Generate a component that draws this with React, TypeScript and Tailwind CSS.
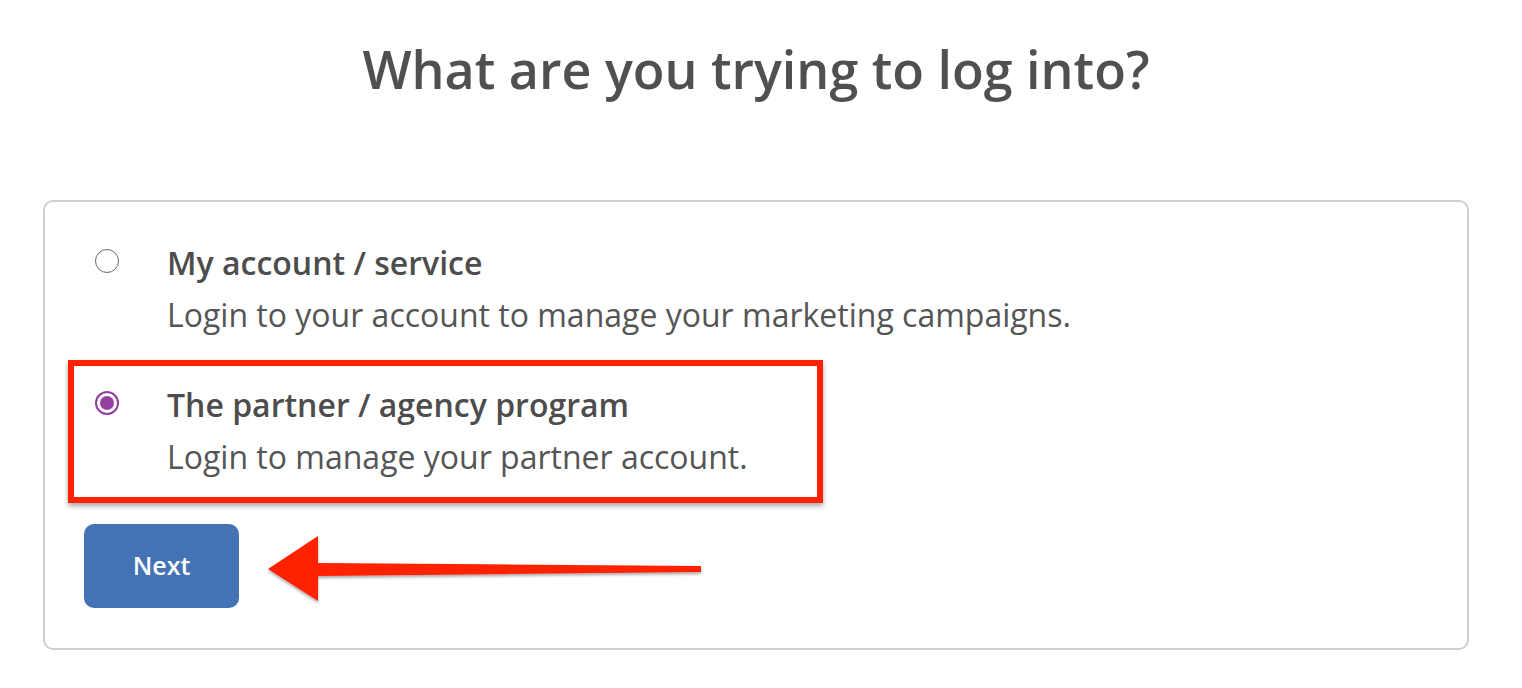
const options = [
  {
    id: "account",
    title: "My account / service",
    desc: "Login to your account to manage your marketing campaigns.",
  },
  {
    id: "partner",
    title: "The partner / agency program",
    desc: "Login to manage your partner account.",
  },
];

const Radio = ({ checked }: { checked: boolean }) =>
  checked ? (
    <span className="flex h-[24px] w-[24px] items-center justify-center rounded-full border-2 border-[#8f3f9f] bg-white">
      <span className="h-[14px] w-[14px] rounded-full bg-[#94409f]"></span>
    </span>
  ) : (
    <span className="block h-[24px] w-[24px] rounded-full border border-[#666] bg-white"></span>
  );

export default function App() {
  const selected = "partner";

  return (
    <div className="min-h-[688px] w-full bg-white font-['Open_Sans',sans-serif] text-[#555]">
      <div className="ml-[43px] flex w-[1426px] flex-col">
        <h1 className="pt-[34px] text-center text-[52px] font-semibold leading-[70px] text-[#505050]">
          What are you trying to log into?
        </h1>

        <div className="relative mt-[96px] flex flex-col rounded-[10px] border-2 border-[#cfcfcf] pb-[40px] pl-[39px] pr-[50px] pt-[40px]">
          <div className="flex flex-col gap-[48px]">
            {options.map((o) => (
              <div key={o.id} className="flex items-start">
                <div className="w-[83px] pl-[11px] pt-[7px]">
                  <Radio checked={o.id == selected} />
                </div>
                <div className="flex flex-col">
                  <span className="text-[32px] font-semibold leading-[42px] text-[#4d4d4d]">
                    {o.title}
                  </span>
                  <span className="mt-[10px] text-[32px] leading-[42px] text-[#555]">
                    {o.desc}
                  </span>
                </div>
              </div>
            ))}
          </div>

          <div className="mt-[46px] flex">
            <button className="h-[84px] w-[155px] rounded-[10px] bg-[#4373b5] text-[25px] font-semibold text-white">
              Next
            </button>
          </div>

          {/* annotation: red box around selected option */}
          <div className="absolute left-[23px] top-[158px] h-[143px] w-[755px] border-[6px] border-[#ff2200] shadow-[0_3px_5px_rgba(0,0,0,0.35)]"></div>

          {/* annotation: arrow pointing at the button */}
          <svg
            className="absolute left-[220px] top-[332px]"
            width="440"
            height="70"
            viewBox="0 0 440 70"
          >
            <defs>
              <filter id="sh" x="-10%" y="-30%" width="120%" height="160%">
                <feDropShadow dx="0" dy="2" stdDeviation="1.5" floodColor="#000" floodOpacity="0.35" />
              </filter>
            </defs>
            <path
              d="M3 35 L53 2 L53 29 L436 32 L436 38 L53 42 L53 67 Z"
              fill="#ff2200"
              filter="url(#sh)"
            />
          </svg>
        </div>
      </div>
    </div>
  );
}
